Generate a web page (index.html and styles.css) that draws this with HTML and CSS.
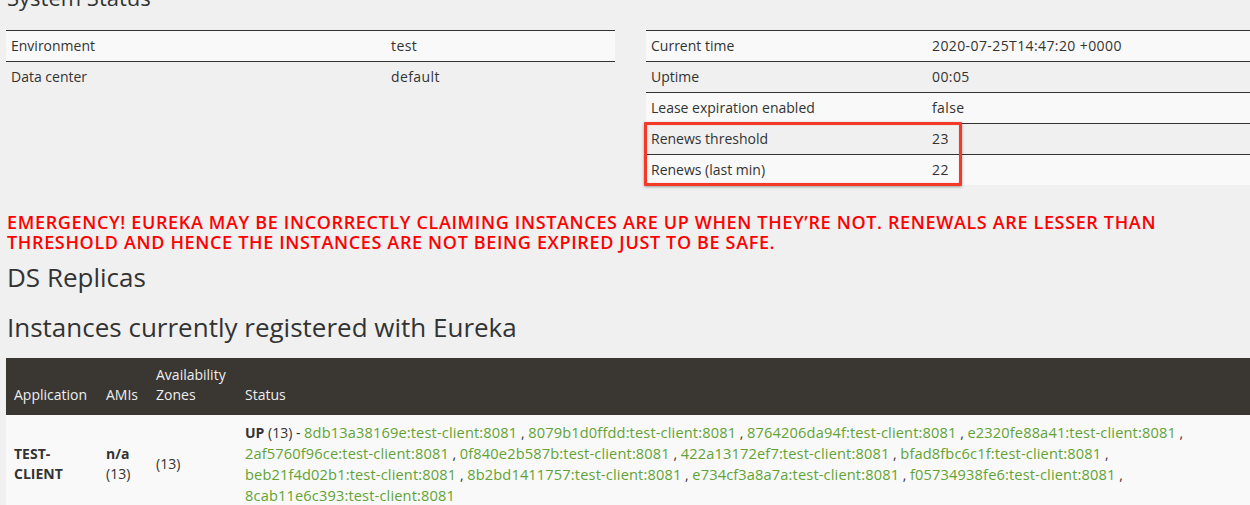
FILE: index.html
```html
<!DOCTYPE html>
<html lang="en">
<head>
  <meta charset="UTF-8" />
  <title>Eureka</title>
  <link rel="stylesheet" href="styles.css">
</head>
<body>
  <div class="page">
    <h1>System Status</h1>
    <div class="status-row">
      <div>
        <table class="info info-left">
          <tr><td>Environment</td><td>test</td></tr>
          <tr><td>Data center</td><td>default</td></tr>
        </table>
      </div>
      <div class="col-right">
        <table class="info info-right">
          <tr><td>Current time</td><td>2020-07-25T14:47:20 +0000</td></tr>
          <tr><td>Uptime</td><td>00:05</td></tr>
          <tr><td>Lease expiration enabled</td><td>false</td></tr>
          <tr><td>Renews threshold</td><td>23</td></tr>
          <tr><td>Renews (last min)</td><td>22</td></tr>
        </table>
        <div class="highlight"></div>
      </div>
    </div>

    <h4 id="uptime">EMERGENCY! EUREKA MAY BE INCORRECTLY CLAIMING INSTANCES ARE UP WHEN THEY’RE NOT. RENEWALS ARE LESSER THAN THRESHOLD AND HENCE THE INSTANCES ARE NOT BEING EXPIRED JUST TO BE SAFE.</h4>

    <h2>DS Replicas</h2>

    <h2>Instances currently registered with Eureka</h2>
    <table class="instances">
      <thead>
        <tr>
          <th class="c-app">Application</th>
          <th class="c-ami">AMIs</th>
          <th class="c-zone">Availability Zones</th>
          <th>Status</th>
        </tr>
      </thead>
      <tbody>
        <tr>
          <td><b>TEST-CLIENT</b></td>
          <td><b>n/a</b> (13)</td>
          <td>(13)</td>
          <td><b>UP</b> (13) - <a href="#">8db13a38169e:test-client:8081</a> , <a href="#">8079b1d0ffdd:test-client:8081</a> , <a href="#">8764206da94f:test-client:8081</a> , <a href="#">e2320fe88a41:test-client:8081</a> , <a href="#">2af5760f96ce:test-client:8081</a> , <a href="#">0f840e2b587b:test-client:8081</a> , <a href="#">422a13172ef7:test-client:8081</a> , <a href="#">bfad8fbc6c1f:test-client:8081</a> , <a href="#">beb21f4d02b1:test-client:8081</a> , <a href="#">8b2bd1411757:test-client:8081</a> , <a href="#">e734cf3a8a7a:test-client:8081</a> , <a href="#">f05734938fe6:test-client:8081</a> , <a href="#">8cab11e6c393:test-client:8081</a></td>
        </tr>
      </tbody>
    </table>
  </div>
</body>
</html>
```

FILE: styles.css
```css
:root {
  --fundo: #f0f0f0;
  --linha: #f9f9f9;
  --texto: #333;
  --cabecalho: #3a3631;
  --verde: #62a336;
  --vermelho: #ff0000;
}

html, body {
  margin: 0;
  overflow: hidden;
}

body {
  background: var(--fundo);
  color: var(--texto);
  font-family: "Open Sans", sans-serif;
  font-size: 14px;
  line-height: 20px;
}

.page {
  width: 1249px;
  padding-left: 6px;
  margin-top: -15px;
}

h1 {
  font-size: 22px;
  font-weight: 400;
  line-height: 24px;
  margin: 0 0 21px 1px;
}

.status-row {
  display: grid;
  grid-template-columns: 609px 609px;
  gap: 31px;
}

.col-right {
  position: relative;
}

table {
  border-collapse: collapse;
  width: 100%;
}

.info {
  table-layout: fixed;
}

.info td {
  padding: 5px;
  border-top: 1px solid #333;
  vertical-align: top;
}

.info tr:nth-child(odd) td {
  background: var(--linha);
}

.info td + td {
  letter-spacing: 0.4px;
}

.info-left td:first-child {
  width: 370px;
}

.info-right td:first-child {
  width: 271px;
}

/* anotacao vermelha em volta dos renews */
.highlight {
  position: absolute;
  left: -2px;
  top: 92px;
  width: 312px;
  height: 58px;
  border: 3px solid #f23a27;
  border-radius: 1px;
  box-shadow: 0 1px 3px rgba(0,0,0,0.35), inset 0 0 1px rgba(240,60,40,0.6);
}

#uptime {
  color: var(--vermelho);
  font-size: 18px;
  font-weight: 600;
  letter-spacing: 0.65px;
  line-height: 20px;
  margin: 27px 0 0 1px;
  max-width: 1190px;
}

h2 {
  font-size: 26px;
  font-weight: 400;
  line-height: 28px;
  margin: 11px 0 0 1px;
}

h2 + h2 {
  margin-top: 22px;
}

.instances {
  margin-top: 17px;
  table-layout: fixed;
}

.instances th {
  background: var(--cabecalho);
  color: #eee;
  font-weight: 400;
  text-align: left;
  vertical-align: bottom;
  padding: 7px 8px 10px;
}

.instances td {
  background: var(--linha);
  padding: 7px 8px 9px;
  vertical-align: middle;
}

.c-app { width: 76px; }
.c-ami { width: 34px; }
.c-zone { width: 73px; }

.instances b {
  font-weight: 700;
}

.instances a {
  color: var(--verde);
  text-decoration: none;
  white-space: nowrap;
  font-size: 14.6px;
  letter-spacing: 0.15px;
}
```
